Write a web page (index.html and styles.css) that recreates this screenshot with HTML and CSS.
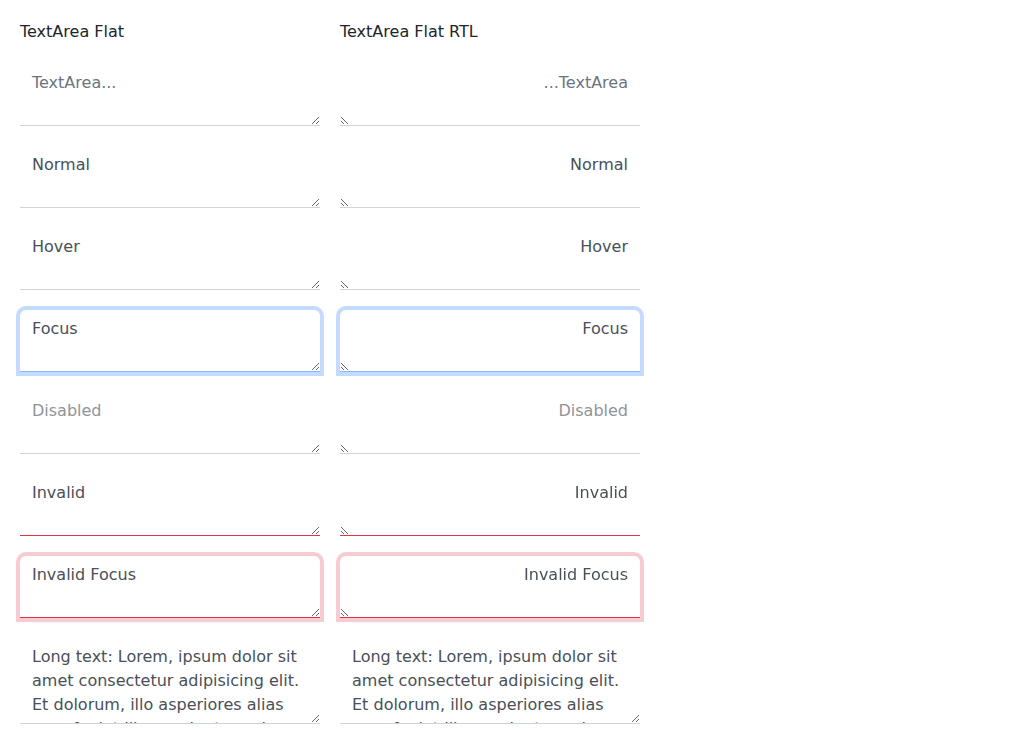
FILE: index.html
```html
<!DOCTYPE html>
<html lang="en">
<head>
<meta charset="utf-8">
<title>TextArea Flat</title>
<link rel="stylesheet" href="styles.css">
</head>
<body>
<div class="grid">
  <div class="col">
    <div class="title">TextArea Flat</div>
    <textarea class="ta" rows="2" placeholder="TextArea..."></textarea>
    <textarea class="ta" rows="2">Normal</textarea>
    <textarea class="ta" rows="2">Hover</textarea>
    <textarea class="ta focus" rows="2">Focus</textarea>
    <textarea class="ta" rows="2" disabled>Disabled</textarea>
    <textarea class="ta invalid" rows="2">Invalid</textarea>
    <textarea class="ta invalid focus-invalid" rows="2">Invalid Focus</textarea>
    <textarea class="ta tall" rows="3">Long text: Lorem, ipsum dolor sit amet consectetur adipisicing elit. Et dolorum, illo asperiores alias eum fugiat illo nesciunt quod, laboriosam voluptates.</textarea>
  </div>
  <div class="col">
    <div class="title">TextArea Flat RTL</div>
    <textarea class="ta" dir="rtl" rows="2" placeholder="TextArea..."></textarea>
    <textarea class="ta" dir="rtl" rows="2">Normal</textarea>
    <textarea class="ta" dir="rtl" rows="2">Hover</textarea>
    <textarea class="ta focus" dir="rtl" rows="2">Focus</textarea>
    <textarea class="ta" dir="rtl" rows="2" disabled>Disabled</textarea>
    <textarea class="ta invalid" dir="rtl" rows="2">Invalid</textarea>
    <textarea class="ta invalid focus-invalid" dir="rtl" rows="2">Invalid Focus</textarea>
    <textarea class="ta tall" rows="3">Long text: Lorem, ipsum dolor sit amet consectetur adipisicing elit. Et dolorum, illo asperiores alias eum fugiat illo nesciunt quod, laboriosam voluptates.</textarea>
  </div>
</div>
</body>
</html>
```

FILE: styles.css
```css
html, body {
  margin: 0;
  padding: 0;
  background: #fff;
}
body {
  padding: 20px;
  font-family: "DejaVu Sans", sans-serif;
  font-size: 16px;
  line-height: 1.5;
  color: #212529;
}
.grid {
  display: grid;
  grid-template-columns: 300px 300px;
  column-gap: 20px;
}
.col {
  display: flex;
  flex-direction: column;
  gap: 20px;
}
.title {
  height: 24px;
}
.ta {
  display: block;
  box-sizing: border-box;
  width: 300px;
  height: 62px;
  margin: 0;
  padding: 7px 12px 5px;
  font-family: "DejaVu Sans", sans-serif;
  font-size: 16px;
  line-height: 24px;
  color: #495057;
  background: #fff;
  border: 0 solid #ced4da;
  border-bottom-width: 1px;
  border-radius: 0;
  outline: none;
  scrollbar-width: none;
}
.ta.tall {
  height: 86px;
}
.ta::-webkit-scrollbar {
  display: none;
}
.ta::placeholder {
  color: #6c757d;
  opacity: 1;
}
.ta:disabled {
  color: #909498;
  background: #fff;
}
.ta.focus {
  border-bottom-color: #86b7fe;
  border-radius: 6px 6px 0 0;
  box-shadow: 0 0 0 4px rgba(13, 110, 253, 0.25);
}
.ta.invalid {
  border-bottom-color: #dc3545;
}
.ta.focus-invalid {
  border-radius: 6px 6px 0 0;
  box-shadow: 0 0 0 4px rgba(220, 53, 69, 0.25);
}
```
